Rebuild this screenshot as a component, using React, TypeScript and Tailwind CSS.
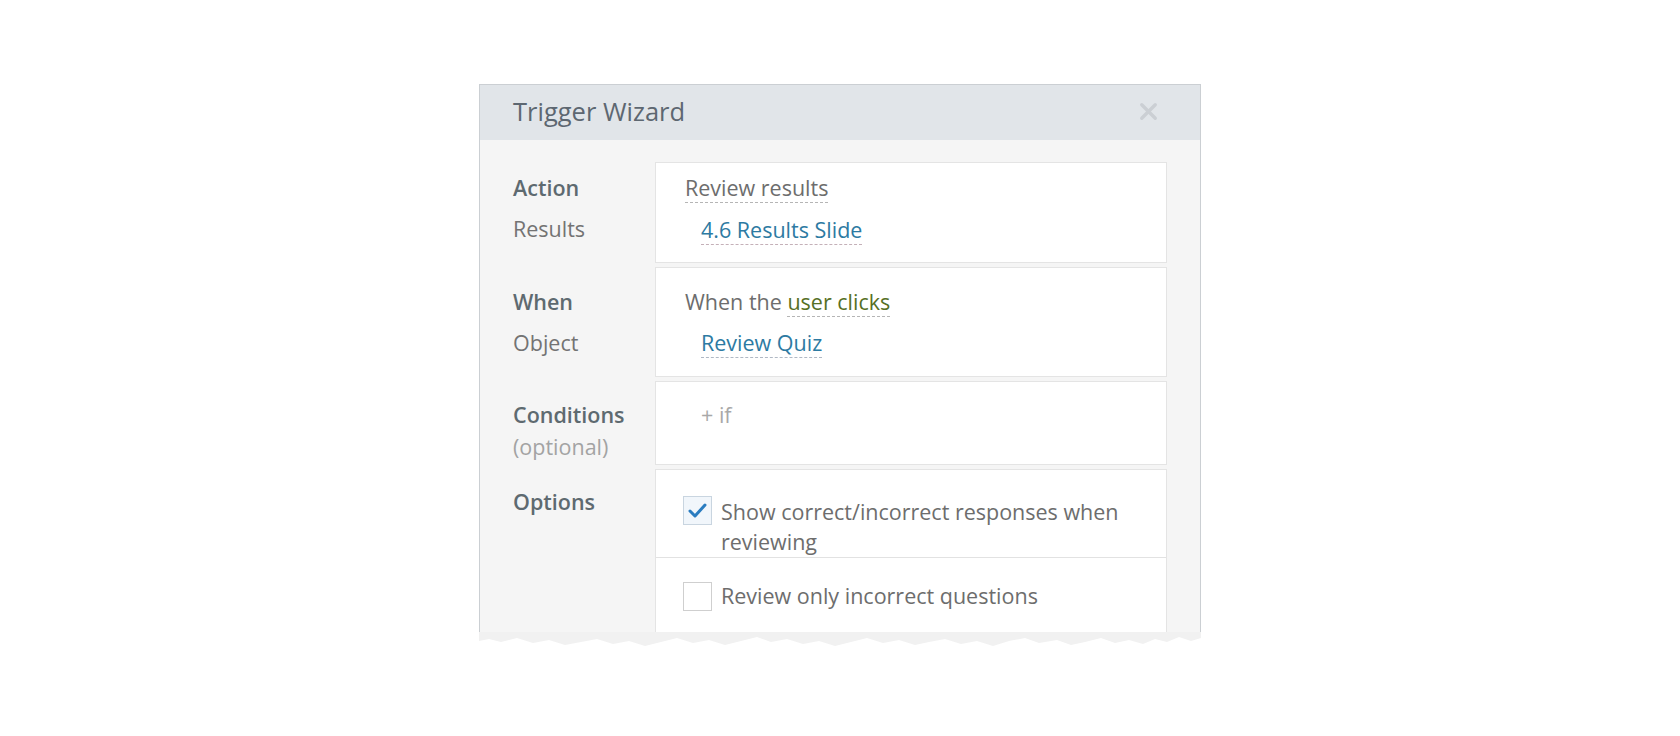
import React from "react";
import { X } from "lucide-react";

const font = "font-['Open_Sans','Noto_Sans',sans-serif]";

function Checkbox({ checked }: { checked?: boolean }) {
  return (
    <div
      className={
        "w-[29px] h-[29px] shrink-0 border " +
        (checked ? "border-[#c9d5e0] bg-[#f1f6fb]" : "border-[#cfcfcf] bg-white")
      }
    >
      {checked && (
        <svg width="27" height="27" viewBox="0 0 27 27">
          <path d="M6 14 L11 19 L21 8" fill="none" stroke="#2a7cc0" strokeWidth="3" strokeLinecap="round" strokeLinejoin="round" />
        </svg>
      )}
    </div>
  );
}

export default function App() {
  const jag =
    "0,0 722,0 722,6 712,9 700,5 688,10 676,7 664,12 650,8 636,11 622,6 606,10 592,13 578,8 560,11 546,6 530,9 514,14 498,9 482,12 466,7 450,10 436,13 420,8 404,11 388,6 372,10 356,14 340,9 324,12 308,7 292,10 278,5 262,9 246,13 230,8 214,11 198,6 182,10 166,14 150,9 134,12 118,7 102,10 86,13 70,8 54,11 38,6 22,10 10,7 0,9";
  return (
    <div className={"w-[1680px] h-[736px] bg-white overflow-hidden " + font}>
      <div className="w-[722px] mx-auto mt-[84px] h-[548px] border-x border-t border-[#cbcfd3] flex flex-col overflow-hidden">
        <div className="h-[55px] shrink-0 bg-[#e1e5e9] flex items-center justify-between pl-[33px] pr-[38px] pb-[3px]">
          <span className="text-[25.5px] text-[#5d6771]">Trigger Wizard</span>
          <X size={27} strokeWidth={3} color="#cbcfd4" />
        </div>
        <div className="flex-1 bg-[#f5f5f5] pt-[22px] pl-[33px] pr-[33px] flex flex-col gap-[4px] text-[21.5px]">
          {/* Row 1 */}
          <div className="flex h-[101px] shrink-0">
            <div className="w-[142px] pt-[12px]">
              <div className="h-[41px] leading-[28px] font-semibold text-[#5e6a70]">Action</div>
              <div className="h-[41px] leading-[28px] text-[#737373]">Results</div>
            </div>
            <div className="flex-1 bg-white border border-[#e4e4e4] pt-[11px] pl-[29px]">
              <div className="h-[42px] leading-[28px]">
                <span className="inline-block border-b border-dashed border-[#b5b5b5] text-[#6d6d6d]">Review results</span>
              </div>
              <div className="h-[41px] leading-[28px] pl-[16px]">
                <span className="inline-block border-b border-dashed border-[#c4b0b8] text-[#2d7aa2]">4.6 Results Slide</span>
              </div>
            </div>
          </div>
          {/* Row 2 */}
          <div className="flex h-[110px] shrink-0">
            <div className="w-[142px] pt-[21px]">
              <div className="h-[41px] leading-[28px] font-semibold text-[#5e6a70]">When</div>
              <div className="h-[41px] leading-[28px] text-[#737373]">Object</div>
            </div>
            <div className="flex-1 bg-white border border-[#e4e4e4] pt-[20px] pl-[29px]">
              <div className="h-[41px] leading-[28px] text-[#6d6d6d]">
                When the{" "}
                <span className="inline-block border-b border-dashed border-[#b5b5b5] text-[#566f25]">user clicks</span>
              </div>
              <div className="h-[41px] leading-[28px] pl-[16px]">
                <span className="inline-block border-b border-dashed border-[#b0b8c4] text-[#2d7aa2]">Review Quiz</span>
              </div>
            </div>
          </div>
          {/* Row 3 */}
          <div className="flex h-[84px] shrink-0">
            <div className="w-[142px] pt-[20px]">
              <div className="h-[32px] leading-[28px] font-semibold text-[#5e6a70]">Conditions</div>
              <div className="leading-[28px] text-[#a3a3a3]">(optional)</div>
            </div>
            <div className="flex-1 bg-white border border-[#e4e4e4] pt-[19px] pl-[45px]">
              <div className="leading-[28px] text-[#a8a8a8]">+ if</div>
            </div>
          </div>
          {/* Row 4 */}
          <div className="flex flex-1">
            <div className="w-[142px] pt-[19px]">
              <div className="leading-[28px] font-semibold text-[#5e6a70]">Options</div>
            </div>
            <div className="flex-1 bg-white border-x border-t border-[#e4e4e4] flex flex-col">
              <div className="flex items-start pt-[26px] pl-[27px] border-b border-[#e2e2e2] h-[88px]">
                <Checkbox checked />
                <div className="ml-[9px] mt-[1px] w-[430px] leading-[30px] text-[#6d6d6d]">
                  Show correct/incorrect responses when reviewing
                </div>
              </div>
              <div className="flex items-center pt-[23px] pl-[27px]">
                <Checkbox />
                <div className="ml-[9px] leading-[30px] text-[#6d6d6d]">Review only incorrect questions</div>
              </div>
            </div>
          </div>
        </div>
      </div>
      <div className="w-[722px] mx-auto h-[16px]">
        <svg width="722" height="16" viewBox="0 0 722 16">
          <polygon points={jag} fill="#f1f1f1" />
        </svg>
      </div>
    </div>
  );
}
